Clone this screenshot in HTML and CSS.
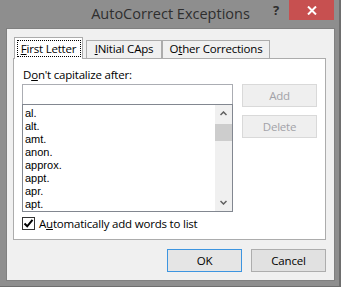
FILE: index.html
```html
<!DOCTYPE html>
<html lang="en">

<head>
    <meta charset="UTF-8">
    <title>AutoCorrect Exceptions</title>
    <link rel="stylesheet" href="styles.css">
</head>

<body>
    <div class="window">
        <div class="titlebar">
            <div></div>
            <div class="title">AutoCorrect Exceptions</div>
            <div class="controls">
                <span class="help">?</span>
                <span class="close">
                    <svg width="10" height="9" viewBox="0 0 10 9">
                        <path d="M1 0.5 L9 8.5 M9 0.5 L1 8.5" stroke="#fff" stroke-width="2" />
                    </svg>
                </span>
            </div>
        </div>

        <div class="client">
            <div class="tabs">
                <div class="tab active"><span class="focus"><u>F</u>irst Letter</span></div>
                <div class="tab tab-caps"><u>I</u>Nitial CAps</div>
                <div class="tab tab-other">O<u>t</u>her Corrections</div>
            </div>

            <div class="page">
                <div class="label">D<u>o</u>n't capitalize after:</div>
                <div class="editor">
                    <div class="fields">
                        <div class="input"></div>
                        <div class="listbox">
                            <ul class="items">
                                <li>al.</li>
                                <li>alt.</li>
                                <li>amt.</li>
                                <li>anon.</li>
                                <li>approx.</li>
                                <li>appt.</li>
                                <li>apr.</li>
                                <li>apt.</li>
                            </ul>
                            <div class="scrollbar">
                                <div class="arrow">
                                    <svg width="7" height="5" viewBox="0 0 7 5">
                                        <path d="M0.5 4 L3.5 1 L6.5 4" fill="none" stroke="#606060" stroke-width="1.5" />
                                    </svg>
                                </div>
                                <div class="thumb"></div>
                                <div class="track"></div>
                                <div class="arrow">
                                    <svg width="7" height="5" viewBox="0 0 7 5">
                                        <path d="M0.5 1 L3.5 4 L6.5 1" fill="none" stroke="#606060" stroke-width="1.5" />
                                    </svg>
                                </div>
                            </div>
                        </div>
                    </div>
                    <div class="side">
                        <div class="btn disabled">Add</div>
                        <div class="btn disabled">Delete</div>
                    </div>
                </div>
                <div class="check">
                    <span class="box">
                        <svg width="11" height="11" viewBox="0 0 11 11">
                            <path d="M1.5 5.5 L4.2 8.3 L9.5 1.8" fill="none" stroke="#000" stroke-width="2" />
                        </svg>
                    </span>
                    <span>A<u>u</u>tomatically add words to list</span>
                </div>
            </div>

            <div class="footer">
                <div class="btn default">OK</div>
                <div class="btn">Cancel</div>
            </div>
        </div>
    </div>
</body>

</html>
```

FILE: styles.css
```css
* {
    margin: 0;
    padding: 0;
    box-sizing: border-box;
}

ul {
    list-style: none;
}

body {
    background: #8e8e8e;
    font-family: "Open Sans", "Liberation Sans", sans-serif;
    font-size: 11.5px;
    letter-spacing: -0.2px;
    color: #000;
}

.window {
    width: 341px;
    height: 287px;
    background: #8e8e8e;
    border-right: 2px solid #6e6e6e;
    border-bottom: 1px solid #6e6e6e;
    padding-left: 6px;
}

/* title bar */

.titlebar {
    height: 28px;
    display: grid;
    grid-template-columns: 1fr auto 1fr;
    margin-left: -6px;
    margin-right: -2px;
}

.title {
    font-size: 14.5px;
    letter-spacing: 0;
    line-height: 28px;
    color: #2e2e2e;
}

.controls {
    display: flex;
    justify-content: flex-end;
    align-items: flex-start;
    padding-right: 7px;
}

.help {
    font-size: 13px;
    font-weight: bold;
    line-height: 20px;
    color: #2e2e2e;
    margin-right: 10px;
}

.close {
    width: 45px;
    height: 20px;
    background: #c75050;
    display: flex;
    align-items: center;
    justify-content: center;
}

/* client area */

.client {
    width: 329px;
    height: 253px;
    background: #f0f0f0;
    border: 1px solid #808080;
    padding: 8px 8px 0 6px;
}

.tabs {
    display: flex;
    align-items: flex-end;
    height: 21px;
    padding-left: 1px;
}

.tab {
    height: 18px;
    border: 1px solid #acacac;
    border-bottom: none;
    background: #f0f0f0;
    text-align: center;
    line-height: 16px;
}

.tab.active {
    width: 69px;
    height: 22px;
    margin-bottom: -1px;
    margin-right: 3px;
    background: #fff;
    position: relative;
    z-index: 1;
    padding-top: 2px;
}

.focus {
    display: inline-block;
    width: 64px;
    height: 17px;
    border: 1px dotted #000;
    line-height: 15px;
}

.tab-caps {
    width: 76px;
}

.tab-other {
    width: 108px;
}

.page {
    border: 1px solid #acacac;
    background: #fff;
    padding: 8px 8px 9px 8px;
}

.label {
    line-height: 16px;
    margin-bottom: 1px;
    padding-left: 1px;
}

.editor {
    display: flex;
    gap: 9px;
}

.fields {
    width: 212px;
}

.input {
    height: 20px;
    border: 1px solid #abadb3;
    border-bottom: none;
}

.listbox {
    height: 108px;
    border: 1px solid #828790;
    display: flex;
    overflow: hidden;
}

.items {
    flex: 1;
    padding: 2px 0 0 2px;
    line-height: 13px;
    font-family: "Liberation Sans", sans-serif;
    font-size: 11px;
    letter-spacing: 0;
}

.scrollbar {
    width: 17px;
    background: #f0f0f0;
    display: flex;
    flex-direction: column;
}

.arrow {
    height: 17px;
    display: flex;
    align-items: center;
    justify-content: center;
}

.thumb {
    height: 17px;
    margin-top: 2px;
    background: #cdcdcd;
}

.track {
    flex: 1;
}

.side {
    display: flex;
    flex-direction: column;
    gap: 8px;
}

.btn {
    width: 75px;
    height: 23px;
    border: 1px solid #adadad;
    background: #e1e1e1;
    text-align: center;
    line-height: 21px;
}

.btn.disabled {
    background: #efefef;
    border-color: #d9d9d9;
    color: #a2a2a8;
}

.btn.default {
    border-color: #3d95e0;
    background: #e5e5e5;
}

.check {
    display: flex;
    align-items: center;
    gap: 4px;
    height: 13px;
    margin-top: 5px;
    line-height: 13px;
}

.box {
    width: 13px;
    height: 13px;
    border: 1px solid #333;
    background: #fff;
    display: flex;
    align-items: center;
    justify-content: center;
}

.footer {
    display: flex;
    justify-content: flex-end;
    gap: 9px;
    margin-top: 9px;
}
```
